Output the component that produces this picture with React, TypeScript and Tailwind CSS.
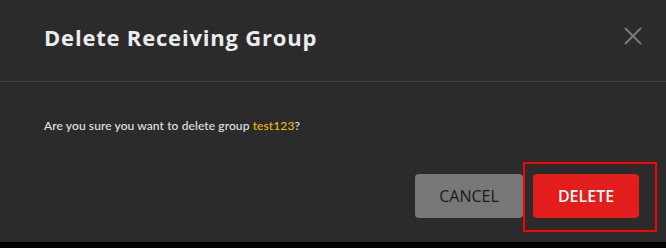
import { X } from 'lucide-react';

export default function App() {
  return (
    <div className="w-[666px] h-[248px] bg-black overflow-hidden">
      <div className="relative h-[242px] bg-[#2b2b2b] flex flex-col">
        <div className="h-[82px] border-b border-[#444444] flex items-start justify-between pl-[44px] pr-[18px] pt-[21px]">
          <h1 className="text-[22px] leading-[32px] font-bold tracking-[0.8px] text-[#ececec] font-['Open_Sans',sans-serif]">
            Delete Receiving Group
          </h1>
          <button className="text-[#7b7b7b]">
            <X size={30} strokeWidth={1.5} />
          </button>
        </div>

        <div className="pl-[44px] pt-[35px] text-[12px] leading-[18px] tracking-[0.1px] text-[#e2e2e2] font-['Lato',sans-serif] font-medium">
          Are you sure you want to delete group <span className="text-[#f0b90b]">test123</span>?
        </div>

        <div className="mt-auto mb-[24px] flex justify-end gap-[10px] pr-[27px]">
          <button className="w-[108px] h-[44px] rounded-[4px] bg-[#777777] text-[#1a1a1a] text-[16px] font-medium font-['Open_Sans',sans-serif]">
            CANCEL
          </button>
          <button className="w-[106px] h-[44px] rounded-[4px] bg-[#e31c1c] text-white text-[16px] font-semibold font-['Open_Sans',sans-serif]">
            DELETE
          </button>
        </div>

        {/* annotation outline */}
        <div className="absolute left-[523px] top-[162px] w-[134px] h-[70px] border-2 border-[#ff0000] pointer-events-none" />
      </div>
    </div>
  );
}
